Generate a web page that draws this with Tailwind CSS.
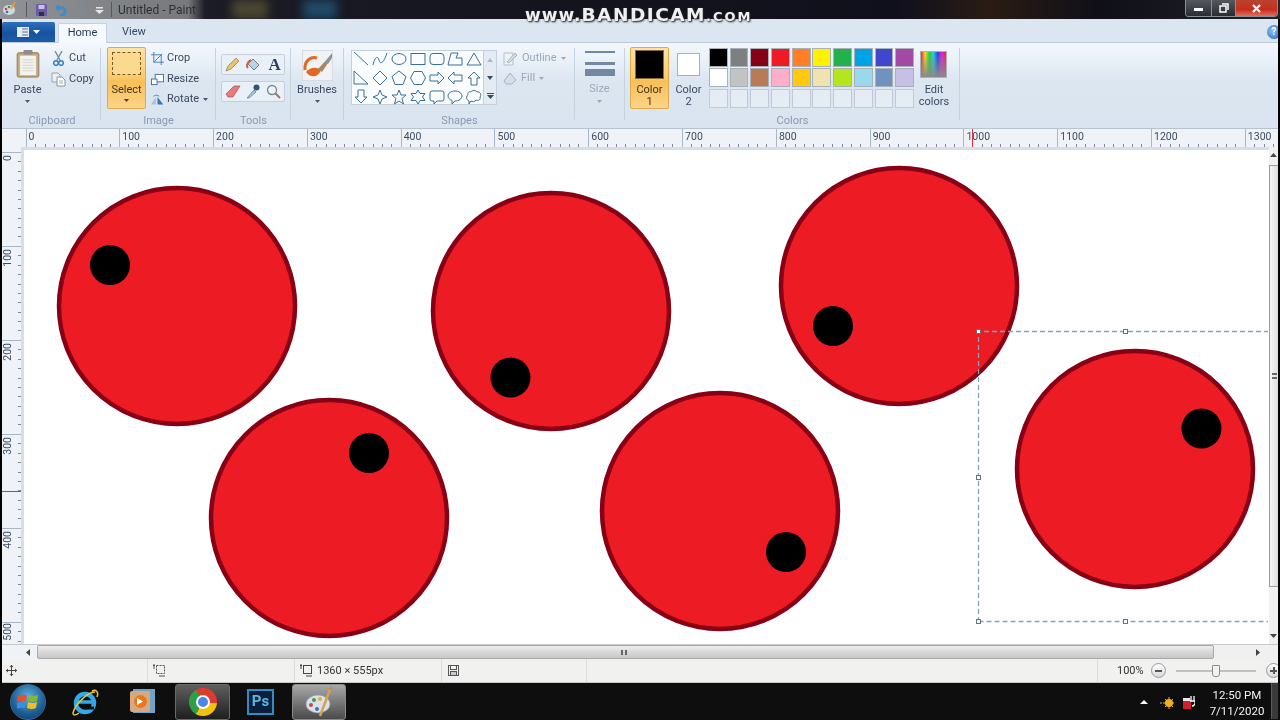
<!DOCTYPE html>
<html lang="en">
<head>
<meta charset="utf-8">
<title>Untitled - Paint</title>
<script src="https://cdn.jsdelivr.net/npm/@tailwindcss/browser@4"></script>
</head>
<body class="m-0 overflow-hidden bg-black">
<div class="relative w-[1280px] h-[720px] overflow-hidden flex flex-col font-['Roboto','Noto_Sans',sans-serif] text-[11px] text-[#3b4a60] bg-black blur-[0.35px]">

  <!-- title bar -->
  <header class="relative h-[19px] shrink-0 flex items-center bg-[linear-gradient(90deg,#8f9296_0,#77797c_188px,#1c1c26_205px,#15151f_500px,#10101c_900px,#2a1c14_990px,#0f0f18_1100px,#23232b_100%)]">
    <div class="absolute left-[232px] top-0 w-[36px] h-[19px] bg-[#4a4630] blur-[5px]"></div>
    <div class="absolute left-[303px] top-0 w-[34px] h-[19px] bg-[#1f4a68] blur-[5px]"></div>
    <div class="relative flex items-center w-[195px] h-[19px]">
      <svg class="absolute left-[3px] top-[2px] w-[13px] h-[14px]" viewBox="0 0 13 14"><ellipse cx="6" cy="8" rx="6" ry="5" fill="#cfd8dc"/><circle cx="3" cy="7" r="1.300" fill="#c0453a"/><circle cx="6" cy="5" r="1.300" fill="#3f8f5a"/><circle cx="4" cy="10" r="1.300" fill="#3a70b8"/><path d="M12 0 8 7" stroke="#d8a040" stroke-width="2"/></svg>
      <div class="absolute left-[26px] top-[2px] w-px h-[15px] bg-[#55575a]"></div>
      <svg class="absolute left-[36px] top-[4px] w-[11px] h-[12px]" viewBox="0 0 11 12"><rect width="11" height="12" rx="1" fill="#6f5aa8"/><rect x="2.500" y="1" width="6" height="4" fill="#c8c4de"/><rect x="3" y="8" width="5" height="4" fill="#2f2a55"/></svg>
      <svg class="absolute left-[54px] top-[3px] w-[15px] h-[13px]" viewBox="0 0 15 13"><path d="M2 5h7a4 4 0 0 1 0 7H6" fill="none" stroke="#3e8bc8" stroke-width="3"/><path d="M5 1 1 5l4 4z" fill="#3e8bc8"/></svg>
      <svg class="absolute left-[75px] top-[3px] w-[13px] h-[13px]" viewBox="0 0 15 13"><path d="M13 5H6a4 4 0 0 0 0 7h3" fill="none" stroke="#7f8a92" stroke-width="3"/><path d="M10 1l4 4-4 4z" fill="#7f8a92"/></svg>
      <svg class="absolute left-[95px] top-[7px] w-[9px] h-[7px]" viewBox="0 0 9 7"><path d="M1 0h7v1.500H1zM0 3h9L4.500 7z" fill="#e8e8e8"/></svg>
      <div class="absolute left-[111px] top-[2px] w-px h-[15px] bg-[#55575a]"></div>
      <span class="absolute left-[118px] top-[1px] whitespace-nowrap text-[12px] leading-[18px] text-[#2c2f33]">Untitled - Paint</span>
    </div>
    <!-- window controls -->
    <div class="absolute right-[2px] top-0 h-[17px] flex border border-t-0 border-[#8a8d92] rounded-b-[4px] overflow-hidden">
      <div class="w-[26px] flex items-center justify-center bg-[linear-gradient(#55585f,#2a2c33)] border-r border-[#8a8d92]"><div class="w-[9px] h-[3px] bg-white mt-[3px]"></div></div>
      <div class="w-[24px] flex items-center justify-center bg-[linear-gradient(#55585f,#2a2c33)] border-r border-[#8a8d92]"><svg class="w-[10px] h-[10px]" viewBox="0 0 10 10"><path d="M3 1h6v6M1 3h6v6H1z" fill="none" stroke="#fff" stroke-width="1.500"/></svg></div>
      <div class="w-[41px] flex items-center justify-center bg-[linear-gradient(#b8442f,#c92d1c_60%,#e0705a)]"><svg class="w-[9px] h-[9px]" viewBox="0 0 9 9"><path d="M1 1l7 7M8 1 1 8" stroke="#fff" stroke-width="2.200"/></svg></div>
    </div>
  </header>

  <div class="relative flex-1 flex flex-col ml-[2px] mr-[2px] min-h-0">
    <!-- tab strip -->
    <nav class="h-[24px] shrink-0 flex items-end bg-[#dce6f0] border-b border-[#bccbdb]">
      <div class="w-[53px] h-[20px] mb-[0px] flex items-center justify-center gap-[4px] bg-[linear-gradient(#2d6fbf,#17529d_55%,#1e5da8)] rounded-t-[2px]">
        <svg class="w-[12px] h-[10px]" viewBox="0 0 12 10"><rect width="12" height="10" fill="#e8eef6"/><path d="M5 2h6M5 5h6M5 8h6" stroke="#5a6f8a"/></svg>
        <svg class="w-[7px] h-[4px]" viewBox="0 0 7 4"><path d="M0 0h7L3.500 4z" fill="#fff"/></svg>
      </div>
      <div class="ml-[3px] w-[49px] h-[20px] -mb-px flex items-center justify-center bg-[#f6f9fd] border border-b-0 border-[#c5d2e0] rounded-t-[2px] text-[#1f3553]">Home</div>
      <div class="w-[54px] h-[20px] flex items-center justify-center text-[#33496a]">View</div>
      <div class="ml-auto mb-[3px] w-[11px] h-[14px] overflow-hidden">
        <div class="w-[14px] h-[14px] rounded-full bg-[radial-gradient(circle_at_40%_40%,#8cc0f0,#1f66c0)] flex items-center justify-center text-white text-[10px] font-bold leading-none">?</div>
      </div>
    </nav>

    <!-- ribbon -->
    <section class="h-[86px] shrink-0 flex bg-[linear-gradient(#f4f8fd_0,#e9f0f8_20%,#dce6f1_45%,#d9e4f0_100%)] border-b border-[#b5c3d3]">

      <!-- Clipboard -->
      <div class="w-[99px] relative flex border-r border-[#c5d2e0] mt-[5px] mb-[8px]">
        <div class="w-[51px] flex flex-col items-center pt-[2px]">
          <svg class="w-[24px] h-[28px]" viewBox="0 0 26 31"><rect x="1" y="3" width="24" height="27" rx="2" fill="#c8a878" stroke="#8e7553"/><rect x="4" y="6" width="18" height="22" fill="#f3f3ef" stroke="#b8b8b0" stroke-width=".6"/><path d="M7 11h12M7 14h12M7 17h12M7 20h12M7 23h12" stroke="#cfcfc8"/><rect x="8" y="0" width="10" height="5" rx="1" fill="#8d8e92"/></svg>
          <span class="mt-[5px] leading-[14px]">Paste</span>
          <svg class="w-[5px] h-[3px] mt-[3px]" viewBox="0 0 5 3"><path d="M0 0h5L2.500 3z" fill="#4a5568"/></svg>
        </div>
        <div class="flex flex-col pt-[1px] gap-[2px]">
          <div class="h-[19px] flex items-center gap-[5px]">
            <svg class="w-[11px] h-[15px]" viewBox="0 0 11 15"><path d="M2 0 7 9M9 0 4 9" stroke="#7d8a9a" stroke-width="1.400"/><circle cx="3" cy="12" r="2.300" fill="none" stroke="#2f7fc8" stroke-width="1.500"/><circle cx="8" cy="12" r="2.300" fill="none" stroke="#2f7fc8" stroke-width="1.500"/></svg>
            <span>Cut</span>
          </div>
          <div class="h-[19px] flex items-center gap-[3px] -ml-[2px]">
            <svg class="w-[15px] h-[15px]" viewBox="0 0 15 15"><path d="M1 1h6l2 2v7H1z" fill="#eef1f4" stroke="#9aa2ac"/><path d="M6 5h5l3 3v6H6z" fill="#fff" stroke="#8a929c"/><path d="M8 9h4M8 11h4" stroke="#a8aeb6"/></svg>
            <span>Copy</span>
          </div>
        </div>
        <span class="absolute left-0 w-[100px] text-center bottom-[-8px] leading-[14px] text-[#8b9aae]">Clipboard</span>
      </div>

      <!-- Image -->
      <div class="w-[115px] relative flex border-r border-[#c5d2e0] mt-[5px] mb-[8px] pl-[6px]">
        <div class="w-[39px] h-[62px] -mt-[1px] flex flex-col items-center rounded-[2px] border border-[#e0a94a] bg-[linear-gradient(#fde3a8,#fbc968_50%,#f9bf58_55%,#fcd488)]">
          <div class="w-[29px] h-[23px] mt-[4px] border border-dashed border-[#7a5a20] bg-[#fbd98e]"></div>
          <span class="mt-[8px] leading-[14px] text-[#3f3520]">Select</span>
          <svg class="w-[5px] h-[3px] mt-[2px]" viewBox="0 0 5 3"><path d="M0 0h5L2.500 3z" fill="#4a4020"/></svg>
        </div>
        <div class="flex flex-col pl-[5px] pt-[1px] gap-[1.500px]">
          <div class="h-[19px] flex items-center gap-[3px]">
            <svg class="w-[13px] h-[13px]" viewBox="0 0 14 14"><path d="M3 0v11h11M0 3h11v11" fill="none" stroke="#3f7fb8"/><path d="M3 11 12 2" stroke="#3f7fb8"/></svg>
            <span>Crop</span>
          </div>
          <div class="h-[19px] flex items-center gap-[3px]">
            <svg class="w-[13px] h-[13px]" viewBox="0 0 14 14"><rect x="4.500" y="1.500" width="9" height="8" fill="#fff" stroke="#3f6f9c"/><rect x=".5" y="6.500" width="6" height="6" fill="#fff" stroke="#3f6f9c"/></svg>
            <span>Resize</span>
          </div>
          <div class="h-[19px] flex items-center gap-[3px]">
            <svg class="w-[13px] h-[13px]" viewBox="0 0 16 14"><path d="M0 13 6 4v9z" fill="#b9bec4"/><path d="M8 13 8 4l7 9z" fill="#2f78b8"/><path d="M3 3q4-3 7 0" fill="none" stroke="#2f78b8"/></svg>
            <span>Rotate</span>
            <svg class="w-[5px] h-[3px] ml-[1px]" viewBox="0 0 5 3"><path d="M0 0h5L2.500 3z" fill="#4a5568"/></svg>
          </div>
        </div>
        <span class="absolute left-0 w-[115px] text-center bottom-[-8px] leading-[14px] text-[#8b9aae]">Image</span>
      </div>

      <!-- Tools -->
      <div class="w-[75px] relative border-r border-[#c5d2e0] mt-[5px] mb-[8px] pl-[5px] pt-[6px] flex flex-col gap-[6px]">
        <div class="w-[64px] h-[21px] flex items-center justify-around rounded-[2px] border border-[#c6d0dc] bg-[#eaf0f7]">
          <svg class="w-[15px] h-[15px]" viewBox="0 0 15 15"><path d="M1 14l2-5 8-8 3 3-8 8z" fill="#e9c46a" stroke="#8a7a50" stroke-width=".7"/></svg>
          <svg class="w-[16px] h-[15px]" viewBox="0 0 16 15"><path d="M7 2l6 6-5 5-6-6z" fill="#b9d3ea" stroke="#6a8194"/><path d="M5 3C1 5 0 9 2 11" fill="none" stroke="#d8603a" stroke-width="2"/></svg>
          <span class="text-[17px] leading-none font-bold text-[#27406a] font-['Liberation_Serif',serif]">A</span>
        </div>
        <div class="w-[64px] h-[21px] flex items-center justify-around rounded-[2px] border border-[#c6d0dc] bg-[#eaf0f7]">
          <svg class="w-[16px] h-[13px]" viewBox="0 0 16 13"><path d="M1 9 9 1h6L8 12H3z" fill="#e77a7a" stroke="#a85050" stroke-width=".7"/></svg>
          <svg class="w-[14px] h-[15px]" viewBox="0 0 14 15"><path d="M1 14 8 6l2 2-7 6z" fill="#a5c8e8" stroke="#5a7690" stroke-width=".7"/><circle cx="10.500" cy="3.500" r="3" fill="#33527a"/></svg>
          <svg class="w-[15px] h-[15px]" viewBox="0 0 15 15"><circle cx="6" cy="6" r="4.500" fill="#eef4fa" stroke="#7a8694" stroke-width="1.300"/><path d="M9 9l5 5" stroke="#a87a40" stroke-width="2"/></svg>
        </div>
        <span class="absolute left-0 w-[75px] text-center bottom-[-8px] leading-[14px] text-[#8b9aae]">Tools</span>
      </div>

      <!-- Brushes -->
      <div class="w-[53px] relative border-r border-[#c5d2e0] mt-[5px] mb-[8px] flex flex-col items-center pt-[2px]">
        <svg class="w-[31px] h-[31px]" viewBox="0 0 31 31"><rect width="31" height="31" fill="#f0f2f4" stroke="#c4c8cc"/><path d="M3 20C2 10 10 6 15 8" fill="none" stroke="#e06a24" stroke-width="3"/><path d="M4 22c4 6 12 6 15-2-5-4-12-2-15 2z" fill="#e06a24"/><path d="M16 19 29 5l1 2-10 15z" fill="#a98562"/><path d="M23 12 30 3v5l-4 6z" fill="#8d949c"/></svg>
        <span class="mt-[2px] leading-[14px]">Brushes</span>
        <svg class="w-[5px] h-[3px] mt-[3px]" viewBox="0 0 5 3"><path d="M0 0h5L2.500 3z" fill="#4a5568"/></svg>
      </div>

      <!-- Shapes -->
      <div class="w-[231px] relative border-r border-[#c5d2e0] mt-[5px] mb-[8px] pl-[7px] flex">
        <div class="w-[133px] h-[55px] mt-[2px] bg-[#fafcfe] border border-[#c4d0dd]">
        <div class="-mt-[2px] grid grid-cols-[repeat(7,18.800px)] grid-rows-[repeat(3,19px)] items-center justify-items-center">
          <svg class="w-[16px] h-[16px]" viewBox="0 0 16 16"><path d="M1 1l14 13" fill="none" stroke="#3a7096"/></svg>
          <svg class="w-[16px] h-[16px]" viewBox="0 0 16 16"><path d="M1 14C3 5 6 5 7 9s4 5 8-7" fill="none" stroke="#3a7096"/></svg>
          <svg class="w-[16px] h-[16px]" viewBox="0 0 16 16"><ellipse cx="8" cy="8" rx="7" ry="5.500" fill="none" stroke="#3a7096"/></svg>
          <svg class="w-[16px] h-[16px]" viewBox="0 0 16 16"><rect x="1" y="2.500" width="14" height="11" fill="none" stroke="#3a7096"/></svg>
          <svg class="w-[16px] h-[16px]" viewBox="0 0 16 16"><rect x="1" y="2.500" width="14" height="11" rx="3" fill="none" stroke="#3a7096"/></svg>
          <svg class="w-[16px] h-[16px]" viewBox="0 0 16 16"><path d="M1 14 4 2h7l-2 5h6v7z" fill="none" stroke="#3a7096"/></svg>
          <svg class="w-[16px] h-[16px]" viewBox="0 0 16 16"><path d="M8 2l7 12H1z" fill="none" stroke="#3a7096"/></svg>
          <svg class="w-[16px] h-[16px]" viewBox="0 0 16 16"><path d="M1 1v13h14z" fill="none" stroke="#3a7096"/></svg>
          <svg class="w-[16px] h-[16px]" viewBox="0 0 16 16"><path d="M8 1l7 7-7 7-7-7z" fill="none" stroke="#3a7096"/></svg>
          <svg class="w-[16px] h-[16px]" viewBox="0 0 16 16"><path d="M8 1l7 5.500-3 8H4l-3-8z" fill="none" stroke="#3a7096"/></svg>
          <svg class="w-[16px] h-[16px]" viewBox="0 0 16 16"><path d="M4 1.500h8L15.500 8 12 14.500H4L.5 8z" fill="none" stroke="#3a7096"/></svg>
          <svg class="w-[16px] h-[16px]" viewBox="0 0 16 16"><path d="M1 5h8V2l6 6-6 6v-3H1z" fill="none" stroke="#3a7096"/></svg>
          <svg class="w-[16px] h-[16px]" viewBox="0 0 16 16"><path d="M15 5H7V2L1 8l6 6v-3h8z" fill="none" stroke="#3a7096"/></svg>
          <svg class="w-[16px] h-[16px]" viewBox="0 0 16 16"><path d="M5 15V8H2l6-6 6 6h-3v7z" fill="none" stroke="#3a7096"/></svg>
          <svg class="w-[16px] h-[16px]" viewBox="0 0 16 16"><path d="M5 1v7H2l6 6 6-6h-3V1z" fill="none" stroke="#3a7096"/></svg>
          <svg class="w-[16px] h-[16px]" viewBox="0 0 16 16"><path d="M8 1l2 5 5 2-5 2-2 5-2-5-5-2 5-2z" fill="none" stroke="#3a7096"/></svg>
          <svg class="w-[16px] h-[16px]" viewBox="0 0 16 16"><path d="M8 1l2 5h5l-4 3.500 1.500 5.500L8 12l-4.500 3L5 9.500 1 6h5z" fill="none" stroke="#3a7096"/></svg>
          <svg class="w-[16px] h-[16px]" viewBox="0 0 16 16"><path d="M8 1l2 3.500h5L12.500 8l2.500 3.500h-5L8 15l-2-3.500H1L3.500 8 1 4.500h5z" fill="none" stroke="#3a7096"/></svg>
          <svg class="w-[16px] h-[16px]" viewBox="0 0 16 16"><path d="M3 2h10a2 2 0 0 1 2 2v6a2 2 0 0 1-2 2H8l-3 3v-3H3a2 2 0 0 1-2-2V4a2 2 0 0 1 2-2z" fill="none" stroke="#3a7096"/></svg>
          <svg class="w-[16px] h-[16px]" viewBox="0 0 16 16"><path d="M8 2c4 0 7 2.300 7 5s-3 5-7 5l-3 3v-3.500C2.600 10.500 1 9 1 7c0-2.700 3-5 7-5z" fill="none" stroke="#3a7096"/></svg>
          <svg class="w-[16px] h-[16px]" viewBox="0 0 16 16"><path d="M5 3c1-2 5-2 6 0 3-1 5 3 3 5 1 3-2 4-4 3-1 2-4 2-5 1l-2 3v-3C0 11 0 7 2 6 1 4 3 2 5 3z" fill="none" stroke="#3a7096"/></svg>
        </div>
        </div>
        <div class="w-[13px] h-[55px] mt-[2px] flex flex-col border border-l-0 border-[#c4d0dd] bg-[#e4ebf3]">
          <div class="h-[18px] flex items-center justify-center"><svg class="w-[6px] h-[4px]" viewBox="0 0 6 4"><path d="M0 4h6L3 0z" fill="#b0bac6"/></svg></div>
          <div class="h-[18px] flex items-center justify-center"><svg class="w-[6px] h-[4px]" viewBox="0 0 6 4"><path d="M0 0h6L3 4z" fill="#3b4a60"/></svg></div>
          <div class="h-[17px] flex items-center justify-center"><svg class="w-[7px] h-[6px]" viewBox="0 0 7 6"><path d="M0 0h7v1H0zM0 2h7L3.500 6z" fill="#3b4a60"/></svg></div>
        </div>
        <div class="pl-[6px] flex flex-col text-[#9aa8b8]">
          <div class="h-[20px] flex items-center gap-[4px]">
            <svg class="w-[15px] h-[15px]" viewBox="0 0 15 15"><path d="M1 2h9v12H1z" fill="#eef3f8" stroke="#b4c0cc"/><path d="M4 11 12 2l2 2-8 8z" fill="#d5dee8" stroke="#a8b4c0"/></svg>
            <span>Outline</span>
            <svg class="w-[5px] h-[3px]" viewBox="0 0 5 3"><path d="M0 0h5L2.500 3z" fill="#9aa8b8"/></svg>
          </div>
          <div class="h-[20px] flex items-center gap-[3px]">
            <svg class="w-[15px] h-[15px]" viewBox="0 0 15 15"><path d="M7 2l6 7-4 4H3L1 10z" fill="#d5dee8" stroke="#a8b4c0"/></svg>
            <span>Fill</span>
            <svg class="w-[5px] h-[3px] ml-[1px]" viewBox="0 0 5 3"><path d="M0 0h5L2.500 3z" fill="#9aa8b8"/></svg>
          </div>
        </div>
        <span class="absolute left-0 w-[231px] text-center bottom-[-8px] leading-[14px] text-[#8b9aae]">Shapes</span>
      </div>

      <!-- Size -->
      <div class="w-[50px] relative border-r border-[#c5d2e0] mt-[5px] mb-[8px] flex flex-col items-center pt-[3px]">
        <div class="w-[30px] flex flex-col">
          <div class="h-[2px] bg-[#7488a4]"></div>
          <div class="h-[3px] mt-[9px] bg-[#7488a4]"></div>
          <div class="h-[7px] mt-[4px] bg-[#7488a4]"></div>
        </div>
        <span class="mt-[6px] leading-[14px] text-[#9aa8b8]">Size</span>
        <svg class="w-[5px] h-[3px] mt-[4px]" viewBox="0 0 5 3"><path d="M0 0h5L2.500 3z" fill="#9aa8b8"/></svg>
      </div>

      <!-- Colors -->
      <div class="w-[335px] relative border-r border-[#c5d2e0] mt-[5px] mb-[8px] pl-[5px] flex">
        <div class="w-[39px] h-[62px] -mt-[1px] flex flex-col items-center rounded-[2px] border border-[#e0a94a] bg-[linear-gradient(#fde3a8,#fbc968_50%,#f9bf58_55%,#fcd488)]">
          <div class="w-[29px] h-[29px] mt-[2px] bg-black border border-[#8a6a30]"></div>
          <span class="mt-[5px] leading-[12px] text-[#3f3520] text-center">Color<br>1</span>
        </div>
        <div class="w-[39px] flex flex-col items-center">
          <div class="w-[23px] h-[23px] mt-[5px] bg-white border border-[#a8b0ba]"></div>
          <span class="mt-[8px] leading-[12px] text-center">Color<br>2</span>
        </div>
        <div class="ml-[1px] h-[60px] mt-0 grid grid-cols-[repeat(10,18.800px)] grid-rows-[repeat(3,18.700px)] gap-x-[1.900px] gap-y-[1.800px]">
          <div class="border border-[#a8b0ba] bg-[#000000]"></div>
          <div class="border border-[#a8b0ba] bg-[#7f7f7f]"></div>
          <div class="border border-[#a8b0ba] bg-[#880015]"></div>
          <div class="border border-[#a8b0ba] bg-[#ed1c24]"></div>
          <div class="border border-[#a8b0ba] bg-[#ff7f27]"></div>
          <div class="border border-[#a8b0ba] bg-[#fff200]"></div>
          <div class="border border-[#a8b0ba] bg-[#22b14c]"></div>
          <div class="border border-[#a8b0ba] bg-[#00a2e8]"></div>
          <div class="border border-[#a8b0ba] bg-[#3f48cc]"></div>
          <div class="border border-[#a8b0ba] bg-[#a349a4]"></div>
          <div class="border border-[#a8b0ba] bg-[#ffffff]"></div>
          <div class="border border-[#a8b0ba] bg-[#c3c3c3]"></div>
          <div class="border border-[#a8b0ba] bg-[#b97a57]"></div>
          <div class="border border-[#a8b0ba] bg-[#ffaec9]"></div>
          <div class="border border-[#a8b0ba] bg-[#ffc90e]"></div>
          <div class="border border-[#a8b0ba] bg-[#efe4b0]"></div>
          <div class="border border-[#a8b0ba] bg-[#b5e61d]"></div>
          <div class="border border-[#a8b0ba] bg-[#99d9ea]"></div>
          <div class="border border-[#a8b0ba] bg-[#7092be]"></div>
          <div class="border border-[#a8b0ba] bg-[#c8bfe7]"></div>
          <div class="border border-[#c0c9d4] bg-[#e6ecf3]"></div>
          <div class="border border-[#c0c9d4] bg-[#e6ecf3]"></div>
          <div class="border border-[#c0c9d4] bg-[#e6ecf3]"></div>
          <div class="border border-[#c0c9d4] bg-[#e6ecf3]"></div>
          <div class="border border-[#c0c9d4] bg-[#e6ecf3]"></div>
          <div class="border border-[#c0c9d4] bg-[#e6ecf3]"></div>
          <div class="border border-[#c0c9d4] bg-[#e6ecf3]"></div>
          <div class="border border-[#c0c9d4] bg-[#e6ecf3]"></div>
          <div class="border border-[#c0c9d4] bg-[#e6ecf3]"></div>
          <div class="border border-[#c0c9d4] bg-[#e6ecf3]"></div>
        </div>
        <div class="ml-[1px] w-[38px] flex flex-col items-center">
          <div class="w-[27px] h-[27px] mt-[3px] border border-[#a8b0ba] bg-[linear-gradient(transparent,#8a8a8a),linear-gradient(90deg,#ff2020,#ffe020,#20d040,#20d0e0,#2040e0,#e020e0,#ff2020)]"></div>
          <span class="mt-[6px] leading-[12px] text-center">Edit<br>colors</span>
        </div>
        <span class="absolute left-0 w-[335px] text-center bottom-[-8px] leading-[14px] text-[#8b9aae]">Colors</span>
      </div>
    </section>

    <!-- horizontal ruler -->
    <div class="relative h-[18px] shrink-0 flex pl-[23.500px] bg-[#eff3f8]">
      <div class="w-[93.800px] shrink-0 border-l border-[#a8b6c6] pl-[2px] text-[10.500px] leading-[16px] text-[#3d4b60] bg-[repeating-linear-gradient(90deg,transparent_0,transparent_8.380px,#7d8b9c_8.380px,#7d8b9c_9.380px)] bg-[length:100%_3px] bg-bottom bg-no-repeat">0</div>
      <div class="w-[93.800px] shrink-0 border-l border-[#a8b6c6] pl-[2px] text-[10.500px] leading-[16px] text-[#3d4b60] bg-[repeating-linear-gradient(90deg,transparent_0,transparent_8.380px,#7d8b9c_8.380px,#7d8b9c_9.380px)] bg-[length:100%_3px] bg-bottom bg-no-repeat">100</div>
      <div class="w-[93.800px] shrink-0 border-l border-[#a8b6c6] pl-[2px] text-[10.500px] leading-[16px] text-[#3d4b60] bg-[repeating-linear-gradient(90deg,transparent_0,transparent_8.380px,#7d8b9c_8.380px,#7d8b9c_9.380px)] bg-[length:100%_3px] bg-bottom bg-no-repeat">200</div>
      <div class="w-[93.800px] shrink-0 border-l border-[#a8b6c6] pl-[2px] text-[10.500px] leading-[16px] text-[#3d4b60] bg-[repeating-linear-gradient(90deg,transparent_0,transparent_8.380px,#7d8b9c_8.380px,#7d8b9c_9.380px)] bg-[length:100%_3px] bg-bottom bg-no-repeat">300</div>
      <div class="w-[93.800px] shrink-0 border-l border-[#a8b6c6] pl-[2px] text-[10.500px] leading-[16px] text-[#3d4b60] bg-[repeating-linear-gradient(90deg,transparent_0,transparent_8.380px,#7d8b9c_8.380px,#7d8b9c_9.380px)] bg-[length:100%_3px] bg-bottom bg-no-repeat">400</div>
      <div class="w-[93.800px] shrink-0 border-l border-[#a8b6c6] pl-[2px] text-[10.500px] leading-[16px] text-[#3d4b60] bg-[repeating-linear-gradient(90deg,transparent_0,transparent_8.380px,#7d8b9c_8.380px,#7d8b9c_9.380px)] bg-[length:100%_3px] bg-bottom bg-no-repeat">500</div>
      <div class="w-[93.800px] shrink-0 border-l border-[#a8b6c6] pl-[2px] text-[10.500px] leading-[16px] text-[#3d4b60] bg-[repeating-linear-gradient(90deg,transparent_0,transparent_8.380px,#7d8b9c_8.380px,#7d8b9c_9.380px)] bg-[length:100%_3px] bg-bottom bg-no-repeat">600</div>
      <div class="w-[93.800px] shrink-0 border-l border-[#a8b6c6] pl-[2px] text-[10.500px] leading-[16px] text-[#3d4b60] bg-[repeating-linear-gradient(90deg,transparent_0,transparent_8.380px,#7d8b9c_8.380px,#7d8b9c_9.380px)] bg-[length:100%_3px] bg-bottom bg-no-repeat">700</div>
      <div class="w-[93.800px] shrink-0 border-l border-[#a8b6c6] pl-[2px] text-[10.500px] leading-[16px] text-[#3d4b60] bg-[repeating-linear-gradient(90deg,transparent_0,transparent_8.380px,#7d8b9c_8.380px,#7d8b9c_9.380px)] bg-[length:100%_3px] bg-bottom bg-no-repeat">800</div>
      <div class="w-[93.800px] shrink-0 border-l border-[#a8b6c6] pl-[2px] text-[10.500px] leading-[16px] text-[#3d4b60] bg-[repeating-linear-gradient(90deg,transparent_0,transparent_8.380px,#7d8b9c_8.380px,#7d8b9c_9.380px)] bg-[length:100%_3px] bg-bottom bg-no-repeat">900</div>
      <div class="w-[93.800px] shrink-0 border-l border-[#a8b6c6] pl-[2px] text-[10.500px] leading-[16px] text-[#3d4b60] bg-[repeating-linear-gradient(90deg,transparent_0,transparent_8.380px,#7d8b9c_8.380px,#7d8b9c_9.380px)] bg-[length:100%_3px] bg-bottom bg-no-repeat">1000</div>
      <div class="w-[93.800px] shrink-0 border-l border-[#a8b6c6] pl-[2px] text-[10.500px] leading-[16px] text-[#3d4b60] bg-[repeating-linear-gradient(90deg,transparent_0,transparent_8.380px,#7d8b9c_8.380px,#7d8b9c_9.380px)] bg-[length:100%_3px] bg-bottom bg-no-repeat">1100</div>
      <div class="w-[93.800px] shrink-0 border-l border-[#a8b6c6] pl-[2px] text-[10.500px] leading-[16px] text-[#3d4b60] bg-[repeating-linear-gradient(90deg,transparent_0,transparent_8.380px,#7d8b9c_8.380px,#7d8b9c_9.380px)] bg-[length:100%_3px] bg-bottom bg-no-repeat">1200</div>
      <div class="w-[31px] shrink-0 border-l border-[#a8b6c6] pl-[2px] text-[10.500px] leading-[16px] text-[#3d4b60] overflow-hidden bg-[repeating-linear-gradient(90deg,transparent_0,transparent_8.380px,#7d8b9c_8.380px,#7d8b9c_9.380px)] bg-[length:100%_3px] bg-bottom bg-no-repeat">1300</div>
      <div class="absolute left-[970px] top-0 w-px h-[18px] bg-[#e03040]"></div>
    </div>

    <!-- canvas row -->
    <div class="relative h-[497px] shrink-0 flex">
      <!-- vertical ruler -->
      <div class="relative w-[19px] shrink-0 bg-[#eff3f8] pt-[5px]">
        <div class="h-[94px] border-t border-[#a8b6c6] bg-[repeating-linear-gradient(180deg,transparent_0,transparent_8.380px,#7d8b9c_8.380px,#7d8b9c_9.380px)] bg-[length:3px_100%] bg-right bg-no-repeat"><span class="block w-[14px] text-[10.500px] leading-[12px] [writing-mode:vertical-rl] rotate-180 text-[#3d4b60] pb-[2px]">0</span></div>
        <div class="h-[94px] border-t border-[#a8b6c6] bg-[repeating-linear-gradient(180deg,transparent_0,transparent_8.380px,#7d8b9c_8.380px,#7d8b9c_9.380px)] bg-[length:3px_100%] bg-right bg-no-repeat"><span class="block w-[14px] text-[10.500px] leading-[12px] [writing-mode:vertical-rl] rotate-180 text-[#3d4b60] pb-[2px]">100</span></div>
        <div class="h-[94px] border-t border-[#a8b6c6] bg-[repeating-linear-gradient(180deg,transparent_0,transparent_8.380px,#7d8b9c_8.380px,#7d8b9c_9.380px)] bg-[length:3px_100%] bg-right bg-no-repeat"><span class="block w-[14px] text-[10.500px] leading-[12px] [writing-mode:vertical-rl] rotate-180 text-[#3d4b60] pb-[2px]">200</span></div>
        <div class="h-[94px] border-t border-[#a8b6c6] bg-[repeating-linear-gradient(180deg,transparent_0,transparent_8.380px,#7d8b9c_8.380px,#7d8b9c_9.380px)] bg-[length:3px_100%] bg-right bg-no-repeat"><span class="block w-[14px] text-[10.500px] leading-[12px] [writing-mode:vertical-rl] rotate-180 text-[#3d4b60] pb-[2px]">300</span></div>
        <div class="h-[94px] border-t border-[#a8b6c6] bg-[repeating-linear-gradient(180deg,transparent_0,transparent_8.380px,#7d8b9c_8.380px,#7d8b9c_9.380px)] bg-[length:3px_100%] bg-right bg-no-repeat"><span class="block w-[14px] text-[10.500px] leading-[12px] [writing-mode:vertical-rl] rotate-180 text-[#3d4b60] pb-[2px]">400</span></div>
        <div class="h-[22px] overflow-hidden border-t border-[#a8b6c6] bg-[repeating-linear-gradient(180deg,transparent_0,transparent_8.380px,#7d8b9c_8.380px,#7d8b9c_9.380px)] bg-[length:3px_100%] bg-right bg-no-repeat"><span class="block w-[14px] text-[10.500px] leading-[12px] [writing-mode:vertical-rl] rotate-180 text-[#3d4b60]">500</span></div>
        <div class="absolute left-0 top-[344px] w-[19px] h-px bg-[#e03040]"></div>
      </div>
      <!-- drawing surface -->
      <div class="relative flex-1 min-w-0 bg-white border-l-[3px] border-t-[3px] border-[#d5dfea]">
        <svg class="block w-[1245px] h-[494px]" viewBox="24 150 1245 494">
          <g fill="#ed1c24" stroke="#880015" stroke-width="4.500">
            <circle cx="177" cy="306" r="118"/>
            <circle cx="551" cy="311" r="118"/>
            <circle cx="899" cy="286" r="118"/>
            <circle cx="329" cy="518" r="118"/>
            <circle cx="720" cy="511" r="118"/>
            <circle cx="1135" cy="469" r="118"/>
          </g>
          <g fill="#000">
            <circle cx="110" cy="265" r="20"/>
            <circle cx="510.500" cy="377.500" r="20"/>
            <circle cx="833" cy="326" r="20"/>
            <circle cx="369" cy="453" r="20"/>
            <circle cx="786" cy="552" r="20"/>
            <circle cx="1201.500" cy="428.500" r="20"/>
          </g>
          <path d="M978.500 622V331.500H1268M978.500 621.500H1268" fill="none" stroke="#7ba6c4" stroke-width="1.300" stroke-dasharray="5 3"/>
          <g fill="#fff" stroke="#66727e">
            <rect x="976.500" y="329.500" width="4" height="4"/>
            <rect x="1123.500" y="329.500" width="4" height="4"/>
            <rect x="976.500" y="475.500" width="4" height="4"/>
            <rect x="976.500" y="619.500" width="4" height="4"/>
            <rect x="1123.500" y="619.500" width="4" height="4"/>
          </g>
        </svg>
      </div>
      <!-- vertical scrollbar -->
      <div class="w-[9px] shrink-0 bg-[#f0f0f0] flex flex-col items-center relative">
        <svg class="w-[7px] h-[4px] mt-[6px]" viewBox="0 0 7 4"><path d="M0 4h7L3.500 0z" fill="#444"/></svg>
        <div class="absolute left-0 top-[18px] w-[9px] h-[422px] bg-[linear-gradient(90deg,#f6f6f6,#dcdcdc)] border-y border-l border-[#9c9c9c] flex items-center justify-center">
          <div class="w-[5px] h-[6px] border-y-2 border-[#666]"></div>
        </div>
        <svg class="w-[7px] h-[4px] mt-auto mb-[6px]" viewBox="0 0 7 4"><path d="M0 0h7L3.500 4z" fill="#444"/></svg>
      </div>
    </div>

    <!-- horizontal scrollbar -->
    <div class="h-[15px] shrink-0 flex items-center bg-[#f0f0f0] border-t border-[#c8c8c8]">
      <div class="w-[35px] h-[14px] flex items-center justify-end pr-[7px] bg-[#eff3f8]"><svg class="w-[4px] h-[7px]" viewBox="0 0 4 7"><path d="M4 0v7L0 3.500z" fill="#444"/></svg></div>
      <div class="w-[1177px] h-[14px] rounded-[2px] border border-[#a8a8a8] bg-[linear-gradient(#eeeeee,#d8d8d8_50%,#c8c8c8)] flex items-center justify-center">
        <div class="w-[6px] h-[5px] border-x-2 border-[#666] -translate-x-[2px]"></div>
      </div>
      <div class="flex-1 flex justify-end pr-[18px]"><svg class="w-[4px] h-[7px]" viewBox="0 0 4 7"><path d="M0 0v7l4-3.500z" fill="#444"/></svg></div>
    </div>

    <!-- status bar -->
    <footer class="h-[24px] shrink-0 flex items-center bg-[#f1f1ef] text-[#333] border-b border-[#c8c8c8]">
      <div class="w-[146px] h-full flex items-center pl-[4px] border-r border-[#dcdcdc]">
        <svg class="w-[11px] h-[11px]" viewBox="0 0 11 11"><path d="M5.500 0v11M0 5.500h11" stroke="#444"/><path d="M3.500 2 5.500 0l2 2zM3.500 9l2 2 2-2zM2 3.500 0 5.500l2 2zM9 3.500l2 2-2 2z" fill="#444"/></svg>
      </div>
      <div class="w-[147px] h-full flex items-center pl-[5px] border-r border-[#dcdcdc]">
        <svg class="w-[13px] h-[13px]" viewBox="0 0 13 13"><rect x="3.500" y="1.500" width="8" height="8" fill="none" stroke="#555" stroke-dasharray="2 1"/><path d="M1 0v5M0 1.500h2M6 12h6" stroke="#555"/></svg>
      </div>
      <div class="w-[147px] h-full flex items-center gap-[4px] pl-[5px] border-r border-[#dcdcdc]">
        <svg class="w-[13px] h-[13px]" viewBox="0 0 13 13"><rect x="3.500" y="1.500" width="8" height="8" fill="none" stroke="#444"/><path d="M1 0v5M0 1.500h2M6 12h6" stroke="#444"/></svg>
        <span class="leading-none">1360 × 555px</span>
      </div>
      <div class="w-[145px] h-full flex items-center pl-[6px] border-r border-[#dcdcdc]">
        <svg class="w-[11px] h-[11px]" viewBox="0 0 11 11"><rect x=".5" y=".5" width="10" height="10" fill="none" stroke="#555"/><rect x="2.500" y=".5" width="6" height="4" fill="none" stroke="#555"/><rect x="2.500" y="6.500" width="6" height="4" fill="#c8c8c8" stroke="#555"/></svg>
      </div>
      <div class="w-[511px] h-full border-r border-[#dcdcdc]"></div>
      <div class="flex-1 flex items-center pl-[18px] h-full overflow-hidden">
        <span class="leading-none w-[27px] shrink-0 pl-[1px]">100%</span>
        <div class="ml-[8px] w-[15px] h-[15px] shrink-0 rounded-full border border-[#9a9a9a] bg-[linear-gradient(#fff,#d8d8d8)] flex items-center justify-center"><div class="w-[7px] h-[2px] bg-[#555]"></div></div>
        <div class="relative ml-[10px] w-[80px] shrink-0 h-[2px] bg-[#c0c0c0]">
          <div class="absolute left-[36px] -top-[5px] w-[8px] h-[12px] rounded-b-[3px] rounded-t-[1px] border border-[#8a8a8a] bg-[#f2f2f2]"></div>
        </div>
        <div class="ml-[10px] w-[15px] h-[15px] shrink-0 rounded-full border border-[#9a9a9a] bg-[linear-gradient(#fff,#d8d8d8)] flex items-center justify-center relative"><div class="w-[7px] h-[2px] bg-[#555]"></div><div class="absolute w-[2px] h-[7px] bg-[#555]"></div></div>
      </div>
    </footer>
  </div>

  <!-- taskbar -->
  <div class="relative h-[37px] shrink-0 flex items-center bg-[#0e0e0e] text-white">
    <div class="ml-[10px] w-[36px] h-[36px] shrink-0 rounded-full flex items-center justify-center bg-[radial-gradient(circle_at_50%_35%,#5fb0e0,#1c5d94_60%,#0e3258)] border border-[#3a6d94]">
      <svg class="w-[22px] h-[20px]" viewBox="0 0 22 20"><path d="M1 4q4-2 9-1l-1 6q-5-1-9 1z" fill="#e8502a"/><path d="M12 3q4 2 9 0l-1 6q-4 2-9 0z" fill="#7fba3a"/><path d="M0 11q4-2 9-1l-1 6q-5-1-9 1z" fill="#3a8ee0"/><path d="M11 10q4 2 9 0l-1 6q-4 2-9 0z" fill="#f0c020"/></svg>
    </div>
    <div class="ml-[23px] w-[32px] h-[32px] shrink-0 flex items-center justify-center">
      <svg class="w-[30px] h-[30px]" viewBox="0 0 30 30"><circle cx="15" cy="16" r="9" fill="none" stroke="#35a8e8" stroke-width="4.500"/><path d="M7 15h17" stroke="#35a8e8" stroke-width="3.500"/><path d="M24 21h-8" stroke="#0e0e0e" stroke-width="3"/><path d="M25 5C18 5 5 17 3 26c0 3 3 2 6 0M22 4c4-2 7 1 5 6" fill="none" stroke="#e8c830" stroke-width="1.500"/></svg>
    </div>
    <div class="ml-[29px] w-[25px] h-[25px] shrink-0 relative">
      <div class="absolute right-0 top-0 w-[22px] h-[24px] bg-[#6fa3c8]"></div>
      <div class="absolute left-0 top-[2px] w-[20px] h-[21px] rounded-[2px] bg-[#d8a880] flex items-center justify-center"><div class="w-[13px] h-[13px] rounded-full bg-[#e8781e] flex items-center justify-center"><svg class="w-[6px] h-[7px]" viewBox="0 0 6 7"><path d="M0 0v7l6-3.500z" fill="#fff"/></svg></div></div>
    </div>
    <div class="ml-[20px] w-[55px] h-[36px] shrink-0 rounded-[3px] border border-[#6a6a6a] bg-[linear-gradient(#5f5f5f,#1f1f1f)] flex items-center justify-center">
      <div class="w-[28px] h-[28px] rounded-full bg-[conic-gradient(from_-30deg,#e03a2e_0_125deg,#f4c20d_125deg_240deg,#2f9e44_240deg_360deg)] flex items-center justify-center"><div class="w-[14px] h-[14px] rounded-full bg-[#4a86e8] border-2 border-white"></div></div>
    </div>
    <div class="ml-[17px] w-[27px] h-[26px] shrink-0 bg-[#0a2038] border-2 border-[#2f8cc8] flex items-center justify-center text-[15px] font-bold text-[#5cb4e8] leading-none">Ps</div>
    <div class="ml-[18px] w-[54px] h-[36px] shrink-0 rounded-[3px] border border-[#8a8a8a] bg-[linear-gradient(#a8a8a8,#4a4a4a)] flex items-center justify-center">
      <svg class="w-[32px] h-[32px]" viewBox="0 0 32 32"><ellipse cx="15" cy="18" rx="12" ry="9" fill="#d8e2e8" stroke="#8fa0ac" stroke-width=".7"/><circle cx="8" cy="19" r="2" fill="#cc4a3a"/><circle cx="11" cy="14" r="2" fill="#3f9a5a"/><circle cx="14" cy="23" r="2" fill="#3a70b8"/><circle cx="17" cy="13" r="2" fill="#e0b030"/><path d="M28 1 17 30" stroke="#d8a050" stroke-width="2.500"/><path d="M25 3l4 1 0-4z" fill="#c88a40"/></svg>
    </div>
    <!-- tray -->
    <svg class="absolute left-[1140px] top-[17px] w-[8px] h-[4px]" viewBox="0 0 8 4"><path d="M0 4h8L4 0z" fill="#fff"/></svg>
    <svg class="absolute left-[1160px] top-[14px] w-[14px] h-[12px]" viewBox="0 0 14 12"><circle cx="9" cy="6" r="4" fill="#f0b020"/><path d="M9 0v12M3 6h11M5 2l8 8M13 2l-8 8" stroke="#f0b020"/><circle cx="1" cy="6" r=".8" fill="#ccc"/></svg>
    <svg class="absolute left-[1182px] top-[12px] w-[13px] h-[15px]" viewBox="0 0 13 15"><rect x="1" y="3" width="7" height="11" fill="#e8e8e8"/><rect x="1" y="6" width="8" height="8" fill="#d02030"/><path d="M9 1v5M12 1v5M8 6h5v3l-2 2h-1" fill="none" stroke="#fff" stroke-width="1.300"/></svg>
    <div class="absolute right-[13px] top-[4px] w-[60px] text-center text-[11.500px] leading-[16px] text-[#f2f2f2]">12:50 PM<br>7/11/2020</div>
    <div class="absolute right-[2px] top-0 w-[7px] h-[36px] bg-[#3a3a3a] border-l border-[#5a5a5a]"></div>
  </div>

  <!-- watermark -->
  <div class="absolute left-[525px] top-[3px] h-[24px] flex items-baseline leading-[24px] text-[#eef0f2] [text-shadow:1px_1px_2px_#222,0_0_2px_#333] font-['DejaVu_Sans',sans-serif] font-bold">
    <span class="text-[17px] tracking-[1px]">www.</span><span class="text-[18.500px] tracking-[1.500px]">BANDICAM</span><span class="text-[13px] tracking-[2px]">.COM</span>
  </div>
</div>
</body>
</html>
